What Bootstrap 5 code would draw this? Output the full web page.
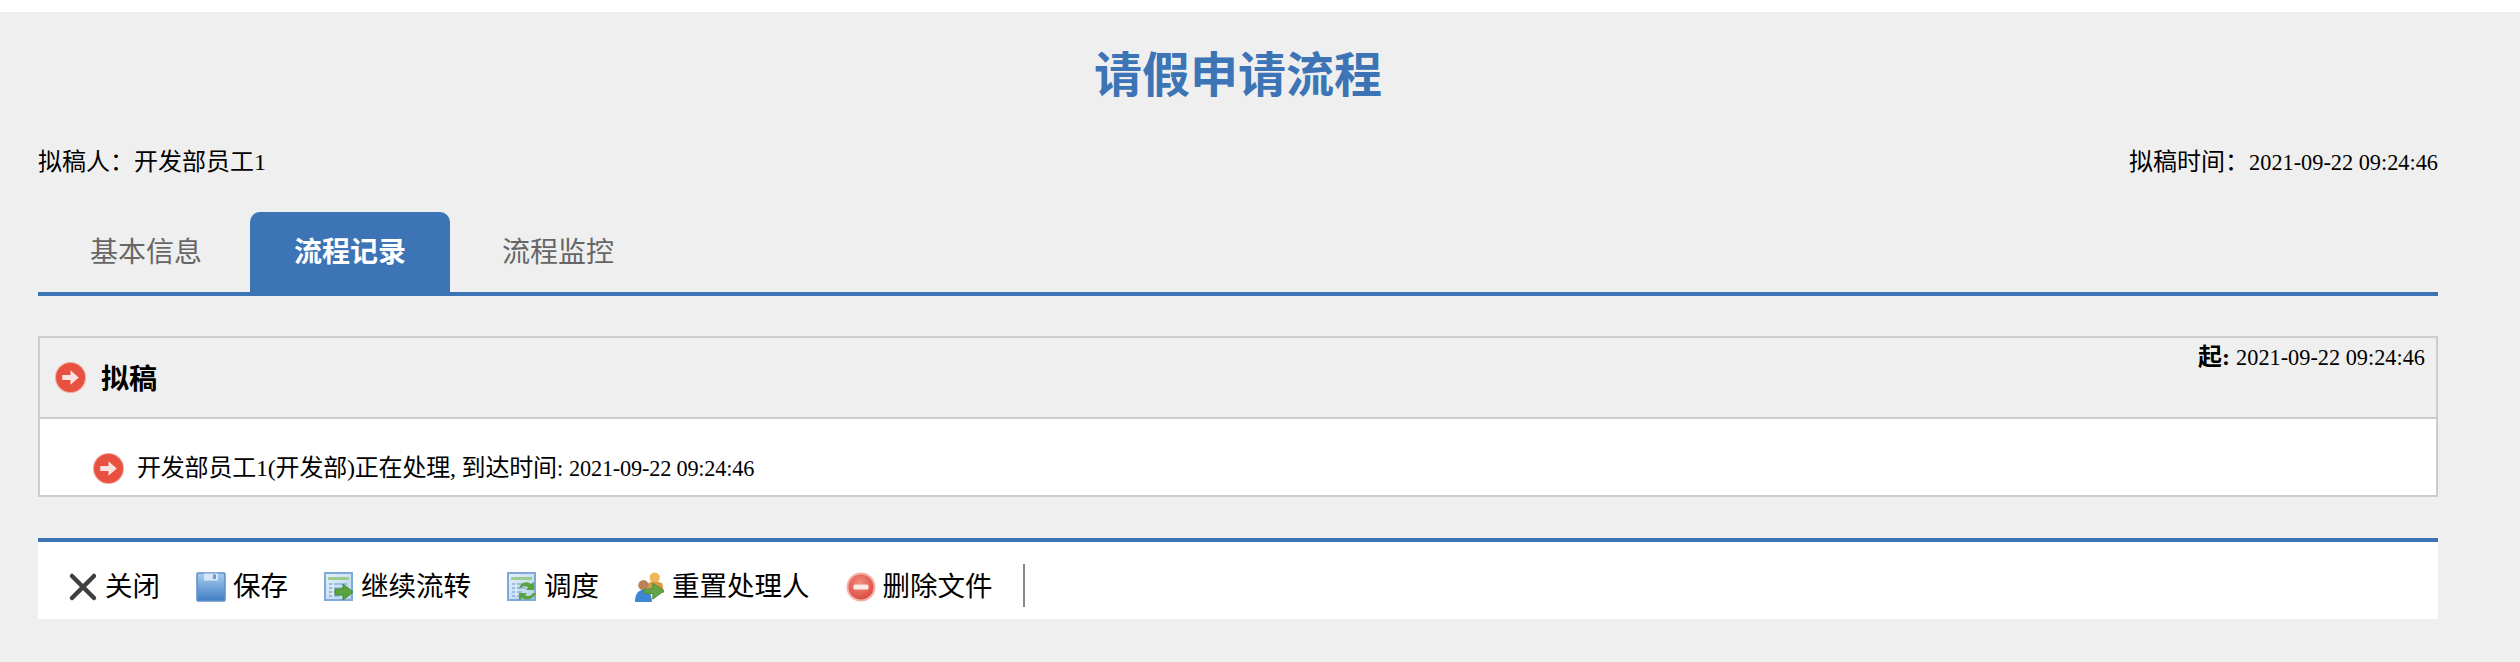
<!DOCTYPE html>
<html lang="zh-CN">
<head>
    <meta charset="UTF-8">
    <meta name="viewport" content="width=device-width, initial-scale=1.0">
    <title>请假申请流程</title>
    <link href="https://cdn.jsdelivr.net/npm/bootstrap@5.3.0/dist/css/bootstrap.min.css" rel="stylesheet">
    <style>
        body {
            background-color: #fff;
            padding-top: 12px;
            color: #000;
            font-family: "Liberation Serif", "Noto Sans CJK SC", serif;
            font-size: 24px;
        }

        .svg-defs { display: block; width: 0; height: 0; }

        .flow-page {
            background-color: #efefef;
            min-height: 650px;
            padding: 40px 82px 0 38px;
        }

        .flow-title {
            color: #3c74b6;
            font-family: inherit;
            font-size: 48px;
            line-height: 48px;
            font-weight: 700;
            margin: 0;
            text-align: center;
        }

        .flow-date { font-size: 22.3px; }

        .info-row {
            height: 36px;
            line-height: 36px;
            margin-top: 44px;
        }

        /* Tabs */
        .flow-tabs {
            margin-top: 32px;
            padding-left: 8px;
            border-bottom: 4px solid #3c74b6;
        }

        .flow-tabs .nav-link {
            width: 200px;
            height: 80px;
            margin: 0;
            padding: 0;
            border: 0;
            border-radius: 10px 10px 0 0;
            background: none;
            color: #666;
            font-size: 28px;
            line-height: 82px;
            text-align: center;
        }

        .flow-tabs .nav-link.active {
            background-color: #3c74b6;
            color: #fff;
            font-weight: 700;
        }

        /* Record panel */
        .record-panel {
            margin-top: 40px;
            border: 2px solid #ccc;
            height: 161px;
            background-color: #fff;
        }

        .record-panel .card-header {
            height: 81px;
            padding: 0 11px 0 15px;
            background-color: #efefef;
            border-bottom: 2px solid #ccc;
        }

        .record-panel .card-body {
            padding: 22px 0 0 53px;
            height: 76px;
            gap: 13px;
        }

        .step-title { gap: 15px; }
        .step-name { font-size: 28px; font-weight: 700; }
        .step-start { line-height: 38px; }
        .step-note { letter-spacing: -.2px; }
        .step-icon { width: 31px; height: 31px; flex: none; filter: blur(.4px); }

        /* Toolbar */
        .flow-toolbar {
            margin-top: 41px;
            height: 81px;
            padding: 27px 0 0 30px;
            background-color: #fff;
            border-top: 4px solid #3c74b6;
            align-items: flex-start;
            gap: 36px;
        }

        .tool-btn {
            display: flex;
            align-items: center;
            gap: 7px;
            height: 36px;
            padding: 0;
            border: 0;
            border-radius: 0;
            color: #000;
            font-size: 27.5px;
            line-height: 36px;
        }

        .tool-btn svg { width: 30px; height: 30px; flex: none; filter: blur(.4px); }
        .tool-btn svg.icon-close { filter: blur(.7px); }

        .tool-sep {
            width: 2px;
            height: 43px;
            margin: -5px 0 0 -6px;
            background-color: #888;
        }
    </style>
</head>
<body>
    <svg class="svg-defs" aria-hidden="true">
        <defs>
            <linearGradient id="saveFill" x1="0" y1="0" x2="0" y2="1">
                <stop offset="0" stop-color="#a9cdf0"/>
                <stop offset="1" stop-color="#3f7fc4"/>
            </linearGradient>
            <linearGradient id="sheetFill" x1="0" y1="0" x2="1" y2="1">
                <stop offset="0" stop-color="#e6f0fb"/>
                <stop offset="1" stop-color="#b5d0ee"/>
            </linearGradient>
            <radialGradient id="delFill" cx=".45" cy=".35" r=".7">
                <stop offset="0" stop-color="#f28e80"/>
                <stop offset="1" stop-color="#d9483c"/>
            </radialGradient>
            <symbol id="arrowIcon" viewBox="0 0 30 30">
                <circle cx="15" cy="15" r="15" fill="#f0a79c"/>
                <circle cx="15" cy="15" r="14" fill="#e8503f"/>
                <path d="M7 12.500h8V8l8 7-8 7v-4.500H7z" fill="#fbe3df"/>
            </symbol>
            <symbol id="sheetIcon" viewBox="0 0 30 30">
                <rect x="1" y="1" width="27" height="27" fill="url(#sheetFill)" stroke="#7fa9d8" stroke-width="2"/>
                <rect x="4" y="5" width="21" height="3" fill="#9ccb8e"/>
                <path d="M5 11h18v2H5zM5 15h14v2H5zM5 19h10v2H5zM5 23h10v2H5z" fill="#9dbde0"/>
                <path d="M9 11v14" stroke="#e6f0fb" stroke-width="1.500"/>
            </symbol>
        </defs>
    </svg>

    <div class="flow-page">
        <h1 class="flow-title">请假申请流程</h1>

        <div class="info-row d-flex justify-content-between">
            <div>拟稿人：开发部员工1</div>
            <div>拟稿时间：<span class="flow-date">2021-09-22 09:24:46</span></div>
        </div>

        <ul class="nav nav-tabs flow-tabs gap-1">
            <li class="nav-item"><a class="nav-link" href="#">基本信息</a></li>
            <li class="nav-item"><a class="nav-link active" href="#">流程记录</a></li>
            <li class="nav-item ms-1"><a class="nav-link" href="#">流程监控</a></li>
        </ul>

        <div class="card rounded-0 record-panel">
            <div class="card-header rounded-0 d-flex justify-content-between">
                <div class="d-flex align-items-center step-title">
                    <svg class="step-icon"><use href="#arrowIcon"/></svg>
                    <span class="step-name pt-1">拟稿</span>
                </div>
                <div class="step-start"><b>起:</b> <span class="flow-date">2021-09-22 09:24:46</span></div>
            </div>
            <div class="card-body d-flex align-items-center">
                <svg class="step-icon"><use href="#arrowIcon"/></svg>
                <span class="step-note">开发部员工1(开发部)正在处理, 到达时间: <span class="flow-date">2021-09-22 09:24:46</span></span>
            </div>
        </div>

        <div class="d-flex flow-toolbar">
            <a class="btn tool-btn" href="#">
                <svg class="icon-close" viewBox="0 0 30 30"><path d="M4 4l22 22M26 4L4 26" stroke="#3f3f3f" stroke-width="4.500" stroke-linecap="round"/></svg>
                关闭
            </a>
            <a class="btn tool-btn" href="#">
                <svg viewBox="0 0 30 30">
                    <rect x="1" y="1" width="28" height="28" rx="1" fill="url(#saveFill)" stroke="#5d8fc8" stroke-width="1.500"/>
                    <rect x="8" y="1.500" width="14" height="7" fill="#d6e7f8"/>
                    <rect x="17" y="2.500" width="3" height="4.500" fill="#6a9bd0"/>
                </svg>
                保存
            </a>
            <a class="btn tool-btn" href="#">
                <svg viewBox="0 0 30 30">
                    <use href="#sheetIcon"/>
                    <path d="M11 17h8v-5l10 8-10 8v-5h-8z" fill="#5aa33f" stroke="#3f8a2d"/>
                </svg>
                继续流转
            </a>
            <a class="btn tool-btn" href="#">
                <svg viewBox="0 0 30 30">
                    <use href="#sheetIcon"/>
                    <path d="M12 16c2-6 8-7 12-4l3-2v8h-8l2-3c-3-1-5-1-7 1zM29 21c-2 6-9 8-14 5l-3 3v-8h8l-2 2c3 2 6 1 8-2z" fill="#5aa33f"/>
                </svg>
                调度
            </a>
            <a class="btn tool-btn" href="#">
                <svg viewBox="-1 -2 32 32">
                    <circle cx="20" cy="4" r="5.500" fill="#f0b65a"/>
                    <path d="M13 10c3-2 10-2 15 0l2 10-17 2z" fill="#d99a3c"/>
                    <circle cx="8" cy="12" r="5.500" fill="#b98155"/>
                    <path d="M-1 30c0-9 4-13 9-13s9 4 9 13z" fill="#3f86d6"/>
                    <path d="M9 16h9v-6l12 8-12 9v-6H9z" fill="#62a548" stroke="#4a8f33"/>
                </svg>
                重置处理人
            </a>
            <a class="btn tool-btn" href="#">
                <svg viewBox="0 0 30 30">
                    <circle cx="15" cy="15" r="14.500" fill="#f3b1a8"/>
                    <circle cx="15" cy="15" r="12.500" fill="url(#delFill)"/>
                    <rect x="7.500" y="12.500" width="15" height="5" rx="1.500" fill="#fde9e6"/>
                </svg>
                删除文件
            </a>
            <div class="tool-sep"></div>
        </div>
    </div>

    <script src="https://cdn.jsdelivr.net/npm/bootstrap@5.3.0/dist/js/bootstrap.bundle.min.js"></script>
</body>
</html>
